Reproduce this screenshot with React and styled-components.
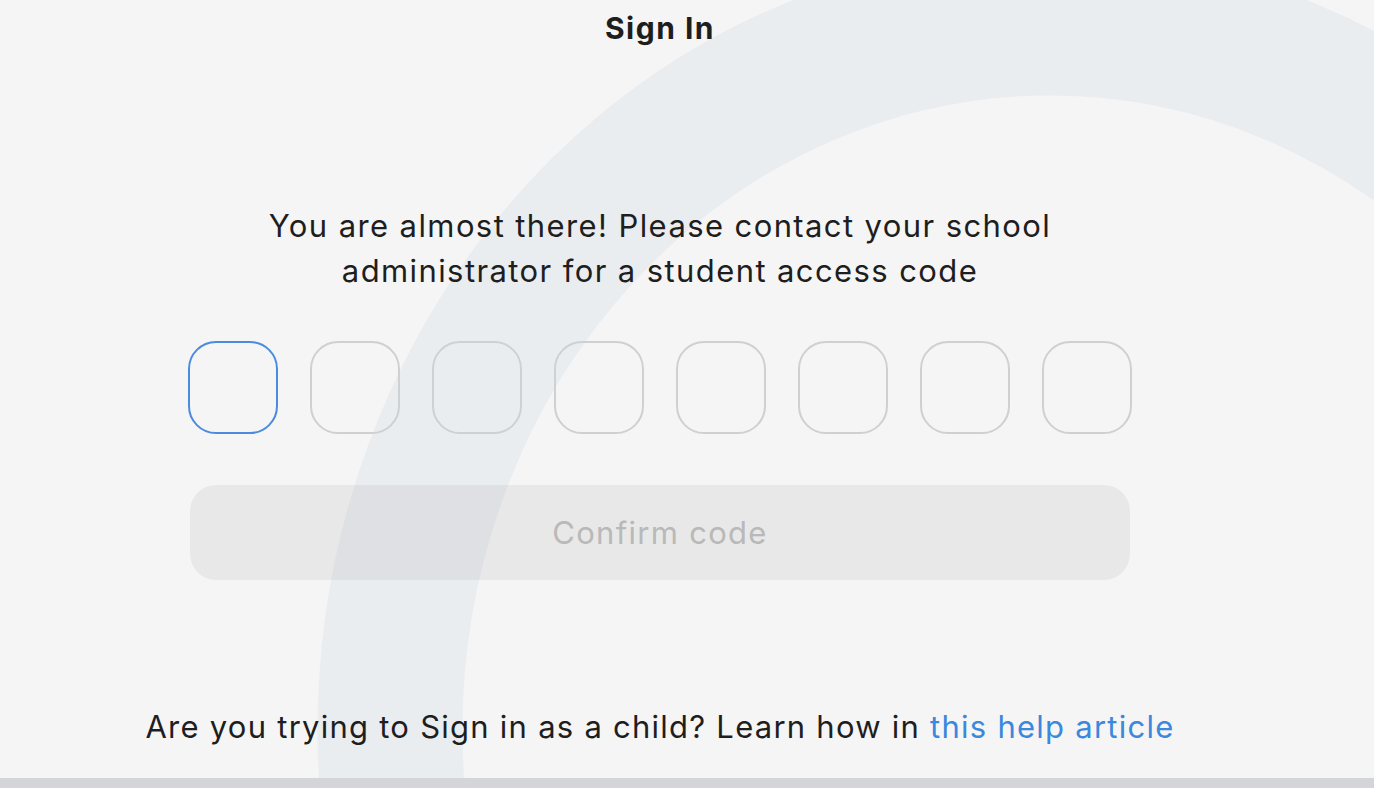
import React from "react";
import styled, { createGlobalStyle } from "styled-components";

const Global = createGlobalStyle`
  html, body { margin: 0; padding: 0; }
  body { background: #f5f5f5; font-family: Inter, "Noto Sans", "Liberation Sans", sans-serif; }
`;

const Page = styled.div`
  position: relative;
  width: 1374px;
  height: 788px;
  overflow: hidden;
  background: #f5f5f5;
  display: flex;
  flex-direction: column;
`;

const Ring = styled.svg`
  position: absolute;
  left: 0;
  top: 0;
  width: 1374px;
  height: 788px;
  z-index: 0;
  pointer-events: none;
`;

const Main = styled.main`
  position: relative;
  z-index: 1;
  flex: 1;
  display: flex;
  flex-direction: column;
  align-items: center;
  padding-right: 54px;
  color: #1e1e1e;
  letter-spacing: 1.4px;
`;

const Title = styled.h1`
  margin: 10px 0 0;
  font-size: 30px;
  line-height: 36px;
  font-weight: 700;
  letter-spacing: 1.5px;
`;

const Message = styled.p`
  margin: 157px 0 0;
  font-size: 31px;
  line-height: 45px;
  font-weight: 400;
  text-align: center;
`;

const CodeRow = styled.div`
  margin-top: 48px;
  display: flex;
  gap: 32px;
`;

const CodeBox = styled.div`
  box-sizing: border-box;
  width: 90px;
  height: 93px;
  border-radius: 28px;
  border: 2px solid ${(p) => (p.$active ? "#4a8be0" : "#d0d0d0")};
`;

const ConfirmButton = styled.button`
  margin-top: 51px;
  width: 940px;
  height: 95px;
  border: none;
  border-radius: 26px;
  background: rgba(0, 0, 0, 0.05);
  color: #b9b9b9;
  font-family: inherit;
  font-size: 31px;
  font-weight: 400;
  letter-spacing: 1.3px;
`;

const Help = styled.p`
  margin: 127px 0 0;
  font-size: 31px;
  line-height: 40px;
  text-align: center;
  letter-spacing: 1.25px;
`;

const HelpLink = styled.a`
  color: #3c88dc;
  text-decoration: none;
`;

const BottomBar = styled.div`
  position: relative;
  z-index: 1;
  height: 10px;
  background: #d4d5d8;
`;

export default function App() {
  const boxes = Array.from({ length: 8 }, (_, i) => i);
  return (
    <Page>
      <Global />
      <Ring viewBox="0 0 1374 788">
        <ellipse cx="1050" cy="730" rx="660" ry="707" fill="none" stroke="#eaedf0" strokeWidth="145" />
      </Ring>
      <Main>
        <Title>Sign In</Title>
        <Message>
          You are almost there! Please contact your school
          <br />
          administrator for a student access code
        </Message>
        <CodeRow>
          {boxes.map((i) => (
            <CodeBox key={i} $active={i === 0} />
          ))}
        </CodeRow>
        <ConfirmButton disabled>Confirm code</ConfirmButton>
        <Help>
          Are you trying to Sign in as a child? Learn how in{" "}
          <HelpLink href="#">this help article</HelpLink>
        </Help>
      </Main>
      <BottomBar />
    </Page>
  );
}
